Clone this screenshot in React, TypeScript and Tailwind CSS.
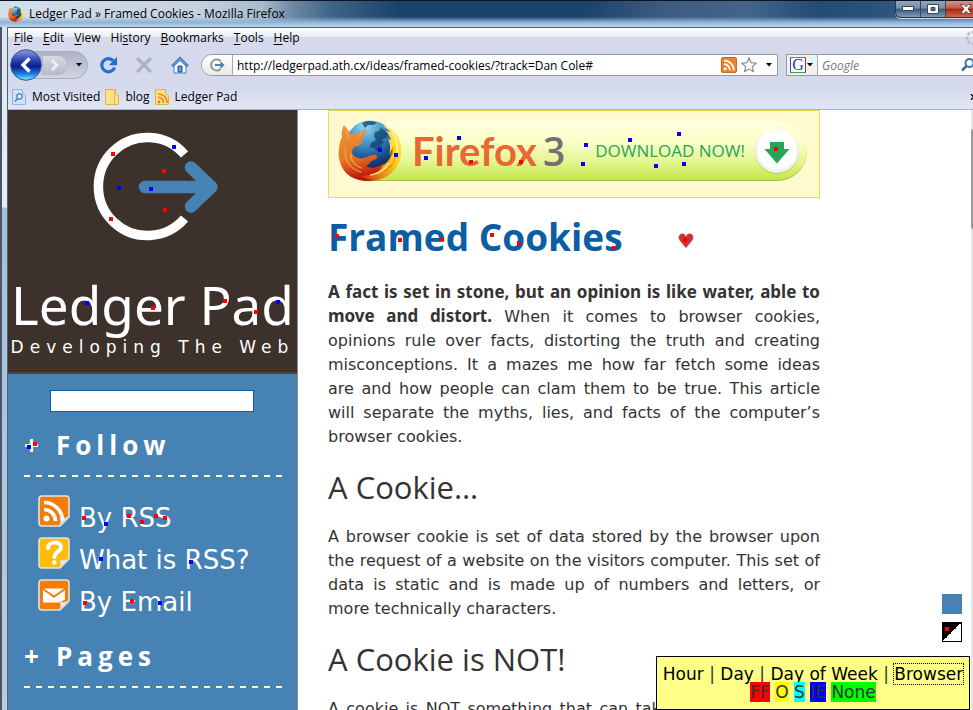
import React from "react";

const ui = "font-['Open_Sans','Noto_Sans',sans-serif]";
const verdana = "font-['DejaVu_Sans',sans-serif]";
const trebuchet = "font-['Open_Sans','Noto_Sans',sans-serif]";

/* Recorded clicks, in page coordinates */
const clicks: { hue: "red" | "blue"; points: [number, number][] }[] = [
  {
    hue: "red",
    points: [
      [105, 44], [156, 61], [157, 100], [103, 109], [145, 198], [217, 191], [248, 202],
      [27, 334], [76, 408], [121, 406], [134, 412], [148, 406], [157, 408], [77, 493], [124, 491],
      [463, 52], [513, 52], [329, 126], [392, 130], [434, 129], [484, 125], [511, 133],
      [768, 39], [606, 138], [677, 130], [939, 519],
    ],
  },
  {
    hue: "blue",
    points: [
      [166, 37], [111, 78], [143, 79], [79, 193], [270, 192],
      [21, 337], [98, 414], [93, 449], [183, 452], [152, 493],
      [451, 28], [418, 48], [372, 40], [388, 45],
      [578, 35], [575, 54], [622, 30], [648, 56], [671, 24], [676, 54],
    ],
  },
];

function ClickMap() {
  return (
    <div className="pointer-events-none absolute inset-0 z-20" aria-hidden="true">
      {clicks.map((group) =>
        group.points.map(([x, y]) => (
          <span
            key={`${group.hue}-${x}-${y}`}
            className={`absolute size-1 ${group.hue === "red" ? "bg-[#ff0000]" : "bg-[#0000ff]"}`}
            style={{ left: x - 2, top: y - 2 }}
          />
        )),
      )}
    </div>
  );
}

function FirefoxLogo({ className, id }: { className: string; id: string }) {
  return (
    <svg viewBox="0 0 64 62" className={className} aria-hidden="true">
      <defs>
        <radialGradient id={`${id}-globe`} cx="0.4" cy="0.1" r="0.95">
          <stop offset="0" stopColor="#9bd8f0" />
          <stop offset="0.35" stopColor="#4a9dcc" />
          <stop offset="0.7" stopColor="#1c5596" />
          <stop offset="1" stopColor="#0a1a55" />
        </radialGradient>
        <linearGradient id={`${id}-fox`} x1="0.1" y1="0" x2="0.3" y2="1">
          <stop offset="0" stopColor="#ee9440" />
          <stop offset="0.6" stopColor="#e8771f" />
          <stop offset="0.85" stopColor="#cf3a16" />
          <stop offset="1" stopColor="#b4120e" />
        </linearGradient>
        <linearGradient id={`${id}-tail`} x1="0.9" y1="0" x2="0.1" y2="0.9">
          <stop offset="0" stopColor="#fff06a" />
          <stop offset="0.45" stopColor="#fbc914" />
          <stop offset="0.7" stopColor="#ee8a18" />
          <stop offset="1" stopColor="#b8160f" />
        </linearGradient>
      </defs>
      <circle cx="32" cy="25" r="24.500" fill={`url(#${id}-globe)`} />
      <path d="M24 3c6-3 11-2 15 0l-4 2-5 0-3 3zM37 12l4-1 2-3 3 2 4 4-2 4-4 1 2 4-3 1 1 5-5 2-3-3-4 0 1-5 5-3-2-4z" fill="#123d70" opacity="0.75" />
      <path d="M44 5c9 2 19 11 19.500 24C64 47 50 61 32 61c-9 0-17-3-23-9l19-1c16 0 26-8 26-22l-3 7c2-8 1-13-1-17l3 1c-1-4-3-7-5-9l5 1z" fill={`url(#${id}-tail)`} />
      <path d="M54 12c5 7 7 16 4 25M58 20c3 9 2 17-4 24M51 43c-4 7-11 11-19 12" fill="none" stroke="#fff59b" strokeWidth="1.500" />
      <path d="M59 33c-2 9-8 17-17 21M55 27c0 8-4 15-10 19" fill="none" stroke="#e68a12" strokeWidth="1.200" />
      <path d="M6 5l7 9c3-1 6-1 8 0l7-6-2 8c-1 3-3 4-2 6 0 3-4 4-8 5-2 3-3 6 0 9 3 2 7 3 10 2 5-1 9-4 12-3 2 2 1 4-2 5-3 0-4 4-8 6 4 3 12 2 18-3-2 8-12 13-24 13 5 3 10 4 14 4-10 2-20 0-27-6C3 48 0 39 1 30c0-5 1-9 3-13C3 13 4 9 6 5z" fill={`url(#${id}-fox)`} />
      <path d="M8 10l3 9M25 12l-5 5M8 28c-3 11 4 21 15 24M13 33c-1 7 4 13 11 15" fill="none" stroke="#f7b35c" strokeWidth="1.300" opacity="0.700" />
    </svg>
  );
}

function FeedIcon({ className }: { className: string }) {
  return (
    <svg viewBox="0 0 16 16" className={className} aria-hidden="true">
      <rect x="0.5" y="0.5" width="15" height="15" rx="1.5" fill="#ee8130" stroke="#d2661b" />
      <circle cx="4.2" cy="11.8" r="1.5" fill="#fff" />
      <path d="M3 7.2a6 6 0 0 1 5.9 6M3 3.5a9.6 9.6 0 0 1 9.7 9.7" fill="none" stroke="#fff" strokeWidth="1.8" />
    </svg>
  );
}

function LedgerMark({ className }: { className: string }) {
  return (
    <svg viewBox="0 0 16 16" className={className} aria-hidden="true">
      <path d="M11.8 4.2a5.6 5.6 0 1 0 0 7.6" fill="none" stroke="#8b8b8b" strokeWidth="1.7" />
      <path d="M6 8h8M11.5 5.3L14.3 8l-2.8 2.7" fill="none" stroke="#4682b4" strokeWidth="1.8" />
    </svg>
  );
}

function TitleBar() {
  return (
    <header className="flex h-[27px] shrink-0 items-start border-t border-[#0b1526] bg-[linear-gradient(to_bottom,transparent_60%,#8fb4d8_82%,#bcd5ec_100%),linear-gradient(90deg,#d3dfea_0%,#c6d3df_20%,#a9bbcc_27%,#6d89a4_30%,#3f6487_34%,#1b426a_41%,#1b426a_60%,#3d5b80_68%,#43658b_77%,#244b74_84%,#3a6087_100%)]">
      <div className="flex h-[26px] items-center pl-2">
        <FirefoxLogo className="size-4" id="title" />
        <h1 className={`${ui} pl-[5px] text-[12px] leading-4 whitespace-nowrap text-black`}>
          Ledger Pad » Framed Cookies - Mozilla Firefox
        </h1>
      </div>
      <div className="ml-auto flex h-[17px] overflow-hidden rounded-bl-md border-b border-l border-[#26364a] shadow-[0_1px_0_#c5d8ea]">
        <button aria-label="Minimize" className="flex w-[25px] items-center justify-center border-r border-[#33475e] bg-[linear-gradient(#8fa5bb_0%,#7690a9_45%,#3b5a7a_50%,#7f9db8_100%)]">
          <svg viewBox="0 0 12 6" className="h-[6px] w-3"><rect x="0.5" y="0.5" width="11" height="4" fill="#fff" stroke="#3c4654" /></svg>
        </button>
        <button aria-label="Maximize" className="flex w-[25px] items-center justify-center border-r border-[#33475e] bg-[linear-gradient(#8fa5bb_0%,#7690a9_45%,#3b5a7a_50%,#7f9db8_100%)]">
          <svg viewBox="0 0 12 10" className="h-[10px] w-3"><path d="M.5.5h11v9H.5zM4 3.5v3h4v-3z" fill="#fff" fillRule="evenodd" stroke="#3c4654" /></svg>
        </button>
        <button aria-label="Close" className="flex w-[27px] items-center justify-end bg-[linear-gradient(#d9938a_0%,#c5584a_45%,#a82312_50%,#cf6a4b_100%)] pr-px">
          <svg viewBox="0 0 12 10" className="h-[10px] w-3"><path d="M.7.5h3.1L6 2.8 8.2.5h3.1L8 5l3.3 4.5H8.2L6 7.2 3.8 9.5H.7L4 5z" fill="#fff" stroke="#4a3c44" strokeWidth="0.8" /></svg>
        </button>
      </div>
    </header>
  );
}

const menus = [["", "F", "ile"], ["", "E", "dit"], ["", "V", "iew"], ["Hi", "s", "tory"], ["", "B", "ookmarks"], ["", "T", "ools"], ["", "H", "elp"]];

function MenuBar() {
  return (
    <nav className="flex h-5 shrink-0 items-center gap-[10px] bg-[linear-gradient(#ffffff_0%,#e9edf6_44%,#d4daec_46%)] pl-[6px]">
      {menus.map(([before, key, after]) => (
        <button key={key + after} className={`${ui} text-[12px] leading-4 text-black`}>
          {before}<span className="underline underline-offset-2">{key}</span>{after}
        </button>
      ))}
      <svg viewBox="0 0 16 16" className="-mr-2 ml-auto size-4 shrink-0" fill="#b5b8c0" aria-hidden="true">
        <circle cx="8" cy="2" r="1.6" /><circle cx="3.8" cy="3.8" r="1.6" /><circle cx="2" cy="8" r="1.6" /><circle cx="3.8" cy="12.2" r="1.6" /><circle cx="8" cy="14" r="1.6" />
      </svg>
    </nav>
  );
}

function Caret() {
  return <svg viewBox="0 0 6 4" className="h-[4px] w-[6px]" aria-hidden="true"><path d="M0 0h6L3 3.5z" fill="#000" /></svg>;
}

function NavBar() {
  return (
    <div className="flex h-[34px] shrink-0 items-center bg-[#d4daec] pl-[3px]">
      <div className="flex h-7 w-[77px] items-center rounded-full border border-[#a9aebf] bg-[linear-gradient(#aeb3c3,#d0d5e4)]">
        <button aria-label="Back" className="-ml-[2px] flex size-8 shrink-0 items-center justify-center">
          <svg viewBox="0 0 32 32" className="size-8">
            <defs>
              <linearGradient id="back" x1="0" y1="0" x2="0" y2="1">
                <stop offset="0" stopColor="#8f9fe0" /><stop offset="0.35" stopColor="#2a41b4" /><stop offset="0.55" stopColor="#0b1e92" /><stop offset="0.8" stopColor="#1c84dc" /><stop offset="1" stopColor="#7df0ff" />
              </linearGradient>
            </defs>
            <circle cx="16" cy="16" r="15.3" fill="url(#back)" stroke="#3c4c9a" />
            <path d="M19.5 9.5L13 16l6.5 6.5" fill="none" stroke="#fff" strokeWidth="3.4" />
          </svg>
        </button>
        <button aria-label="Forward" className="flex h-5 w-[26px] items-center justify-center rounded-r-full border border-[#b3b7c5] bg-[linear-gradient(#d6d9e2,#b9bdca)]">
          <svg viewBox="0 0 10 12" className="h-3 w-[10px]"><path d="M2 1l5 5-5 5" fill="none" stroke="#f1f2f6" strokeWidth="2.6" /></svg>
        </button>
        <button aria-label="History list" className="flex h-5 w-[18px] items-center justify-center pl-1"><Caret /></button>
      </div>
      <button aria-label="Reload" className="ml-[12px]">
        <svg viewBox="0 0 18 18" className="size-[18px]"><path d="M14.6 11.5A6.6 6.6 0 1 1 13.2 4.6" fill="none" stroke="#1f6fd0" strokeWidth="3.2" /><path d="M17 .8v8.4H8.8z" fill="#1f6fd0" /></svg>
      </button>
      <button aria-label="Stop" className="ml-[17px]">
        <svg viewBox="0 0 18 18" className="size-[18px]"><path d="M2 2l14 14M16 2L2 16" stroke="#b1b3b8" strokeWidth="3.4" /></svg>
      </button>
      <button aria-label="Home" className="ml-[18px]">
        <svg viewBox="0 0 18 18" className="size-[18px]">
          <path d="M3 8.5L9 3l6 5.5V17H3z" fill="#f4f9ff" stroke="#4b7fc4" />
          <path d="M9 .8L.6 9.4l1.8 1.4L9 4.4l6.6 6.4 1.8-1.4z" fill="#5f95dc" stroke="#2f62ae" strokeWidth="0.8" />
          <path d="M7 10h4v6H7z" fill="#6696cf" stroke="#244f8f" />
        </svg>
      </button>
      <form className="ml-[12px] flex h-[22px] flex-1 items-center rounded-l-full border border-[#9a9a9a] bg-white" onSubmit={(e) => e.preventDefault()}>
        <span className="flex h-full w-[31px] items-center justify-center rounded-l-full border-r border-[#a9a9a9] bg-[linear-gradient(#ffffff,#e9e9e9)]">
          <LedgerMark className="size-4" />
        </span>
        <input
          aria-label="Address"
          className={`${ui} h-full min-w-0 flex-1 bg-transparent pl-1 text-[12px] leading-4 text-black outline-none`}
          defaultValue="http://ledgerpad.ath.cx/ideas/framed-cookies/?track=Dan Cole#"
        />
        <button type="button" aria-label="Subscribe"><FeedIcon className="size-4" /></button>
        <button type="button" aria-label="Bookmark this page" className="ml-1">
          <svg viewBox="0 0 16 16" className="size-4"><path d="M8 1l2.1 4.6 5 .6-3.7 3.4 1 5L8 12.100l-4.400 2.500 1-5L.9 6.200l5-.6z" fill="#fafafa" stroke="#8a8d92" strokeWidth="1.2" /></svg>
        </button>
        <button type="button" aria-label="Address list" className="flex h-full w-5 items-center justify-center pl-1"><Caret /></button>
      </form>
      <form className="-mr-1 ml-2 flex h-[22px] w-[191px] shrink-0 items-center border border-[#9a9a9a] bg-white" onSubmit={(e) => e.preventDefault()}>
        <button type="button" aria-label="Search engine" className="flex h-full w-[31px] items-center justify-between border-r border-[#a9a9a9] bg-[#f1f1f1] pr-1 pl-[3px]">
          <span className="flex size-4 items-center justify-center border border-t-[#2f8ae0] border-r-[#d02020] border-b-[#30a83a] border-l-[#2a4fc0] bg-white font-['Liberation_Serif',serif] text-[16px] leading-4 text-[#1638a8]">G</span>
          <Caret />
        </button>
        <input aria-label="Search" placeholder="Google" className={`${ui} h-full min-w-0 flex-1 bg-transparent pl-1 text-[12px] leading-4 text-black italic outline-none placeholder:text-[#777777]`} />
        <button aria-label="Search" className="shrink-0">
          <svg viewBox="0 0 16 16" className="size-4"><circle cx="9.500" cy="6" r="4" fill="none" stroke="#3474b4" strokeWidth="2" /><path d="M6.500 9L2 13.500" stroke="#3a6ca8" strokeWidth="2.600" /></svg>
        </button>
      </form>
    </div>
  );
}

function BookmarkIcon({ kind }: { kind: "visited" | "folder" | "feed" }) {
  const blue = kind === "visited";
  return (
    <svg viewBox="0 0 14 16" className="h-4 w-[14px]" aria-hidden="true">
      <path d="M.5.5h10v4l3 2v9H.5z" fill={blue ? "#cfe4f6" : "#fbe08a"} stroke={blue ? "#8fb2d6" : "#dfb548"} />
      {kind === "visited" && <><circle cx="7.500" cy="7.500" r="2.600" fill="#e8f3fc" stroke="#4c7fb4" strokeWidth="1.300" /><path d="M5.600 9.500L3 12.500" stroke="#4c7fb4" strokeWidth="1.600" /></>}
      {kind === "folder" && <path d="M9.500 1v14" stroke="#e2b94e" />}
      {kind === "feed" && <><circle cx="4" cy="13" r="1.400" fill="#e8781e" /><path d="M3 8.500a5 5 0 0 1 5.500 5.500M3 5a8.500 8.500 0 0 1 9 9" fill="none" stroke="#ee8a30" strokeWidth="1.700" /></>}
    </svg>
  );
}

function BookmarksBar() {
  const items = [["visited", "Most Visited"], ["folder", "blog"], ["feed", "Ledger Pad"]] as const;
  return (
    <nav className="flex h-7 shrink-0 items-center gap-[5px] border-b border-[#a9b3cb] bg-[linear-gradient(#d4daec_20%,#dfe5f4_90%)] pt-[2px] pl-1">
      {items.map(([kind, label]) => (
        <a key={label} href="#" className={`${ui} flex items-center gap-[6px] text-[12px] leading-4 text-black`}>
          <BookmarkIcon kind={kind} />
          {label}
        </a>
      ))}
      <button aria-label="More bookmarks" className="-mr-[5px] ml-auto">
        <svg viewBox="0 0 8 6" className="h-[6px] w-2"><path d="M1 0l2.500 3L1 6M4.500 0L7 3 4.500 6" fill="none" stroke="#000" strokeWidth="1.300" /></svg>
      </button>
    </nav>
  );
}

function NoteIcon({ kind }: { kind: "rss" | "help" | "mail" }) {
  const yellow = kind === "help";
  return (
    <svg viewBox="0 0 32 32" className="mt-[2px] size-8 shrink-0" aria-hidden="true">
      <path d="M4 1h24a3 3 0 0 1 3 3v18l-9 9H4a3 3 0 0 1-3-3V4a3 3 0 0 1 3-3z" fill={yellow ? "#ffbd05" : "#f57c08"} stroke="#e3e3df" strokeWidth="1.600" />
      <path d="M31 21l-10 10c2-3 2-5 1-8 3 1 6 0 9-2z" fill="#eeeeea" stroke="#cccccc" strokeWidth="0.600" />
      {kind === "rss" && <><circle cx="8.500" cy="23.500" r="3" fill="#fff" /><path d="M6 14.500a11.500 11.500 0 0 1 11.500 11.500M6 7.500a18.500 18.500 0 0 1 18.500 17" fill="none" stroke="#fff" strokeWidth="3.600" /></>}
      {kind === "help" && <><path d="M10 11c0-7 13-7 13-1 0 5-6.500 4.500-6.500 10" fill="none" stroke="#fff" strokeWidth="4" strokeLinecap="round" /><circle cx="16.300" cy="25.500" r="2.300" fill="#fff" /></>}
      {kind === "mail" && <path d="M6 9.500h20L16 16.500zM5 11l11 8 11-8v9.500l-6 3H5z" fill="#fff" />}
    </svg>
  );
}

function SectionTitle({ children }: { children: string }) {
  return (
    <>
      <h3 className="flex pb-[6px] font-['Open_Sans','Noto_Sans',sans-serif] text-[26px] leading-[48px] font-bold text-white">
        <span className="w-8">+</span>
        <span className="tracking-[5px]">{children}</span>
      </h3>
      <div className="h-[2px] w-[259px] bg-[repeating-linear-gradient(90deg,#ffffcc_0,#ffffcc_6px,transparent_6px,transparent_12px)]" />
    </>
  );
}

function Sidebar() {
  const links = [["rss", "By RSS"], ["help", "What is RSS?"], ["mail", "By Email"]] as const;
  return (
    <aside className="w-[290px] shrink-0 border-r border-[#8c8c8c] bg-[#4682b4]">
      <div className="flex h-[264px] flex-col items-center overflow-hidden border-b-2 border-[#4a4440] bg-[#3c312b] text-white">
        <svg viewBox="0 0 128 110" className="mt-[22px] ml-[7px] h-[110px] w-32 shrink-0" aria-label="Ledger Pad logo">
          <path d="M92.500 22.500A49 49 0 1 0 92.500 86.500" fill="none" stroke="#fff" strokeWidth="9.500" />
          <path d="M53 55h66M99 35.500L119.500 55 99 74.500" fill="none" stroke="#4682b4" strokeWidth="12.500" strokeLinecap="round" strokeLinejoin="round" />
        </svg>
        <h2 className="mt-[32px] font-['Noto_Sans',sans-serif] text-[53px] leading-[62px] whitespace-nowrap">Ledger Pad</h2>
        <p className={`${verdana} text-[17px] leading-[22px] tracking-[6px] whitespace-nowrap`}>Developing The Web</p>
      </div>
      <div className="px-4 pt-4">
        <input aria-label="Search the site" className="ml-[26px] block h-[22px] w-[204px] border border-[#0b5ea3] bg-white px-1 text-sm" />
        <section className="pt-[9px]">
          <SectionTitle>Follow</SectionTitle>
          <ul className="pt-4 pb-[13px] pl-[14px]">
            {links.map(([kind, label]) => (
              <li key={label}>
                <a href="#" className="flex h-[42px] items-start gap-[9px] text-white">
                  <NoteIcon kind={kind} />
                  <span className={`${verdana} pt-2 text-[26px] leading-[34px] whitespace-nowrap`}>{label}</span>
                </a>
              </li>
            ))}
          </ul>
          <SectionTitle>Pages</SectionTitle>
        </section>
      </div>
    </aside>
  );
}

function DownloadBanner() {
  return (
    <div className="h-[88px] border border-[#e5da62] bg-[#fffacd] py-[10px] pr-3 pl-[9px]">
      <a href="#" className="flex h-[60px] items-center rounded-[30px] border-b border-[#9dc04a] bg-[linear-gradient(#ffffe0_0%,#fbffc8_35%,#e3f590_70%,#c3e548_100%)]">
        <FirefoxLogo className="h-[62px] w-16 shrink-0" id="banner" />
        <span className="pl-[10px] font-['Lato',sans-serif] text-[40px] leading-10 font-bold text-[#e96734]">Firefox</span>
        <span className="pl-[6px] font-['Open_Sans',sans-serif] text-[39px] leading-10 font-semibold text-[#76706f]">3</span>
        <span className="ml-auto font-['Open_Sans',sans-serif] text-[17px] leading-6 whitespace-nowrap text-[#26a65b]">DOWNLOAD NOW!</span>
        <svg viewBox="0 0 46 46" className="mr-[7px] ml-[9px] size-[46px] shrink-0" aria-hidden="true">
          <circle cx="23" cy="24" r="22" fill="#b4d833" />
          <circle cx="23" cy="23" r="22" fill="#f1f1f1" />
          <circle cx="23" cy="21.500" r="20" fill="#ffffff" />
          <path d="M16 14h14v7h5.500L23 35.500 10.500 21H16z" fill="#26a65b" />
        </svg>
      </a>
    </div>
  );
}

function Article() {
  const para = `${verdana} text-justify text-[16px] leading-6 text-[#333333]`;
  const heading = `${trebuchet} my-4 text-[31px] leading-[44px] text-[#333333]`;
  return (
    <main className="ml-[30px] w-[492px] shrink-0">
      <DownloadBanner />
      <div className="flex items-center pb-[6px]">
        <h2 className={`${trebuchet} text-[37px] leading-[77px] font-bold whitespace-nowrap text-[#0b5ea3]`}>Framed Cookies</h2>
        <span className={`${verdana} ml-auto w-[143px] pt-2 text-[20px] leading-6 text-[#cc3333]`}>♥</span>
      </div>
      <p className={para}>
        <strong className="font-['Noto_Sans',sans-serif] text-[17px] leading-5 font-bold">
          A fact is set in stone, but an opinion is like water, able to move and distort.
        </strong>{" "}
        When it comes to browser cookies, opinions rule over facts, distorting the truth and creating misconceptions. It a mazes me how far fetch some ideas are{"\u00a0"}and how people can clam them to be true. This article will separate the myths, lies, and facts of the computer’s browser cookies.
      </p>
      <h3 className={heading}>A Cookie…</h3>
      <p className={para}>
        A browser cookie is set of data stored by the browser upon the request of a website on the visitors computer. This set of data is static and is made up of numbers and letters, or more technically characters.
      </p>
      <h3 className={heading}>A Cookie is NOT!</h3>
      <p className={para}>A cookie is NOT something that can take over a computer, and it is not a program.</p>
    </main>
  );
}

function TrackingPanel() {
  return (
    <div className={`${verdana} absolute right-[3px] bottom-0 z-10 w-[314px] border border-black bg-[#ffff88] py-2 text-center text-[17px] leading-[18px] whitespace-nowrap text-[#333333]`}>
      <div>
        <a href="#" className="text-black">Hour</a> | <a href="#" className="text-black">Day</a> | <a href="#" className="text-black">Day of Week</a> | <a href="#" className="text-black outline outline-1 outline-black outline-dotted">Browser</a>
      </div>
      <div>
        <span className="bg-[#ff0000]">FF</span> <span className="bg-[#ffff00]">O</span> <span className="bg-[#00ffff]">S</span> <span className="bg-[#0000ff]">IE</span> <span className="bg-[#00ff00]">None</span>
      </div>
    </div>
  );
}

export default function App() {
  return (
    <div className="flex h-screen w-full flex-col overflow-hidden bg-[#b7cce2]">
      <TitleBar />
      <div className="flex min-h-0 flex-1">
        <div className="w-[7px] shrink-0 border-l-2 border-[#4c5568] bg-[linear-gradient(#dbe5f0_0,#e9eef6_180px,#a5bfdc_181px,#b7cce2_100%)]" />
        <div className="flex min-w-0 flex-1 flex-col border-t border-l border-[#55606f]">
          <MenuBar />
          <NavBar />
          <BookmarksBar />
          <div className="relative flex min-h-0 flex-1 overflow-hidden bg-white">
            <Sidebar />
            <Article />
            <div className="ml-auto w-[2px] shrink-0 bg-[#e6e6e6] pt-[19px]">
              <div className="h-[100px] rounded-l-sm bg-[#9a9a9a]" />
            </div>
            <div className="absolute right-[11px] bottom-[68px] z-10 flex flex-col gap-2">
              <button aria-label="Blue theme" className="size-5 bg-[#4682b4]" />
              <button aria-label="Contrast theme" className="size-5 border border-black bg-[linear-gradient(135deg,#000000_50%,#ffffff_50%)]" />
            </div>
            <TrackingPanel />
            <ClickMap />
          </div>
        </div>
      </div>
    </div>
  );
}
